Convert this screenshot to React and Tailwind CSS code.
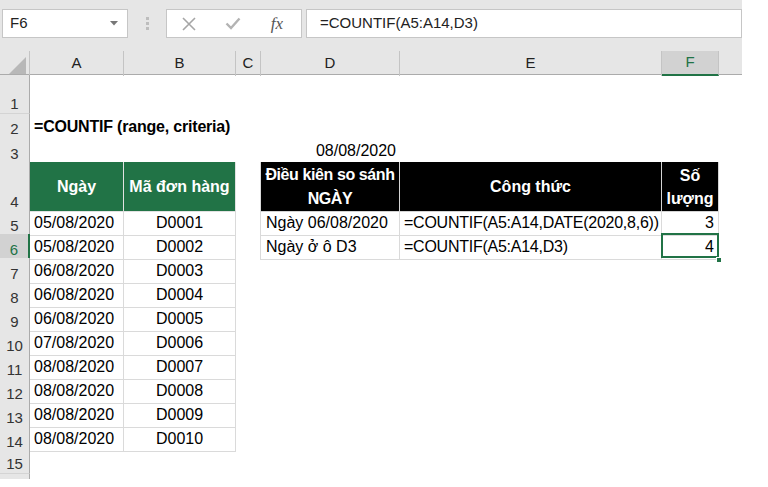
import React from "react";

const cols = "grid grid-cols-[30px_94px_112px_25px_139px_262px_57px_23px] w-[742px]";
const bd = "border-r border-b border-[#dadada]";
const green = "bg-[#217346] text-white font-bold justify-center border-r border-b border-[#e2e2e2]";
const black = "bg-black text-white font-bold justify-center text-center border-r border-b border-[#d4d4d4]";

function Cell({ children, className = "" }) {
  return (
    <div className={`flex items-center whitespace-nowrap overflow-visible px-[4px] pt-[1px] text-[16px] text-black ${className}`}>
      {children}
    </div>
  );
}

function RowHead({ n, selected }) {
  return (
    <div
      className={`flex items-end justify-center pb-[2px] text-[15px] leading-none border-b border-b-[#d4d4d4] ${
        selected
          ? "bg-[#d2d2d2] text-[#217346] border-r-2 border-r-[#217346]"
          : "bg-[#e6e6e6] text-[#333] border-r border-r-[#ababab]"
      }`}
    >
      {n}
    </div>
  );
}

const dates = ["05/08/2020", "05/08/2020", "06/08/2020", "06/08/2020", "06/08/2020", "07/08/2020", "08/08/2020", "08/08/2020", "08/08/2020", "08/08/2020"];

export default function App() {
  return (
    <div className="w-[768px] h-[487px] bg-white overflow-hidden font-['Liberation_Sans',Arial,sans-serif]">
      {/* formula bar */}
      <div className="w-[742px] h-[51px] bg-[#e6e6e6] flex items-start pt-[9px]">
        <div className="ml-[2px] w-[126px] h-[29px] bg-white border border-[#c6c6c6] flex items-center justify-between pl-[7px] pr-[9px]">
          <span className="text-[15px] text-[#222]">F6</span>
          <svg width="8" height="5" viewBox="0 0 8 5"><path d="M0 0h8L4 4.5z" fill="#777" /></svg>
        </div>
        <div className="w-[38px] h-[29px] flex flex-col items-center justify-center gap-[2px]">
          <span className="w-[3px] h-[3px] bg-[#bdbdbd]" />
          <span className="w-[3px] h-[3px] bg-[#bdbdbd]" />
          <span className="w-[3px] h-[3px] bg-[#bdbdbd]" />
        </div>
        <div className="w-[136px] h-[29px] bg-white border border-[#c6c6c6] flex items-center">
          <div className="w-[44px] flex justify-center">
            <svg width="14" height="14" viewBox="0 0 14 14"><path d="M1 1L13 13M13 1L1 13" stroke="#a6a6a6" strokeWidth="1.6" /></svg>
          </div>
          <div className="w-[44px] flex justify-center">
            <svg width="16" height="13" viewBox="0 0 16 13"><path d="M1.5 6.5L6 11L14.5 1.5" stroke="#b3b3b3" strokeWidth="2.4" fill="none" /></svg>
          </div>
          <div className="w-[44px] flex justify-center">
            <span className="font-['Liberation_Serif',serif] italic text-[17px] text-[#555] leading-none">fx</span>
          </div>
        </div>
        <div className="ml-[4px] w-[436px] h-[29px] bg-white border border-[#c6c6c6] flex items-center pl-[13px]">
          <span className="text-[15px] text-[#222]">=COUNTIF(A5:A14,D3)</span>
        </div>
      </div>

      {/* column headers */}
      <div className={`${cols} h-[24px] bg-[#e6e6e6] border-b border-[#ababab] text-[15px] text-[#222]`}>
        <div className="border-r border-[#c4c4c4] flex items-end justify-end pr-[3px] pb-[2px]">
          <svg width="17" height="17" viewBox="0 0 17 17"><path d="M17 0V17H0z" fill="#b8b8b8" /></svg>
        </div>
        {["A", "B", "C", "D", "E"].map((c) => (
          <div key={c} className="border-r border-[#c4c4c4] flex items-center justify-center">{c}</div>
        ))}
        <div className="bg-[#d2d2d2] border-r border-[#c4c4c4] border-b-2 border-b-[#217346] flex items-center justify-center text-[#217346]">F</div>
        <div />
      </div>

      {/* row 1 */}
      <div className={`${cols} h-[39px]`}>
        <RowHead n={1} />
      </div>

      {/* row 2 */}
      <div className={`${cols} h-[24px]`}>
        <RowHead n={2} />
        <Cell className="font-bold tracking-[-0.2px]">=COUNTIF (range, criteria)</Cell>
      </div>

      {/* row 3 */}
      <div className={`${cols} h-[24px]`}>
        <RowHead n={3} />
        <Cell className="border-b border-[#dadada]" />
        <Cell className="border-b border-[#dadada]" />
        <Cell />
        <Cell className="justify-end border-b border-[#dadada]">08/08/2020</Cell>
        <Cell className="border-b border-[#dadada]" />
        <Cell className="border-b border-[#dadada]" />
      </div>

      {/* row 4 */}
      <div className={`${cols} h-[48px]`}>
        <RowHead n={4} />
        <Cell className={green}>Ngày</Cell>
        <Cell className={green}>Mã đơn hàng</Cell>
        <Cell className="border-r border-[#dadada]" />
        <Cell className={`${black} leading-[24px] tracking-[-0.4px] px-[2px]`}>
          <span>Điều kiên so sánh<br />NGÀY</span>
        </Cell>
        <Cell className={black}>Công thức</Cell>
        <Cell className={`${black} leading-[23px]`}>
          <span>Số<br />lượng</span>
        </Cell>
      </div>

      {/* rows 5-14 */}
      {dates.map((d, i) => {
        const n = i + 5;
        return (
          <div key={n} className={`${cols} h-[24px]`}>
            <RowHead n={n} selected={n === 6} />
            <Cell className={bd}>{d}</Cell>
            <Cell className={`${bd} justify-center`}>{"D" + String(i + 1).padStart(4, "0")}</Cell>
            {n === 5 && (
              <>
                <Cell className="border-r border-[#dadada]" />
                <Cell className={`${bd} pl-[5px]`}>Ngày 06/08/2020</Cell>
                <Cell className={`${bd} tracking-[-0.25px]`}>=COUNTIF(A5:A14,DATE(2020,8,6))</Cell>
                <Cell className={`${bd} justify-end`}>3</Cell>
              </>
            )}
            {n === 6 && (
              <>
                <Cell className="border-r border-[#dadada]" />
                <Cell className={`${bd} pl-[5px]`}>Ngày ở ô D3</Cell>
                <Cell className={`${bd} tracking-[-0.25px]`}>=COUNTIF(A5:A14,D3)</Cell>
                <Cell className={`${bd} justify-end relative`}>
                  4
                  <div className="absolute -left-[1px] -top-[1px] w-[58px] h-[25px] border-2 border-[#217346]" />
                  <div className="absolute -right-[4px] -bottom-[4px] w-[6px] h-[6px] bg-[#217346] border border-white" />
                </Cell>
              </>
            )}
          </div>
        );
      })}

      {/* row 15 */}
      <div className={`${cols} h-[24px]`}>
        <RowHead n={15} />
      </div>
      <div className="w-[30px] h-[5px] bg-[#e6e6e6] border-r border-[#ababab]" />
    </div>
  );
}
